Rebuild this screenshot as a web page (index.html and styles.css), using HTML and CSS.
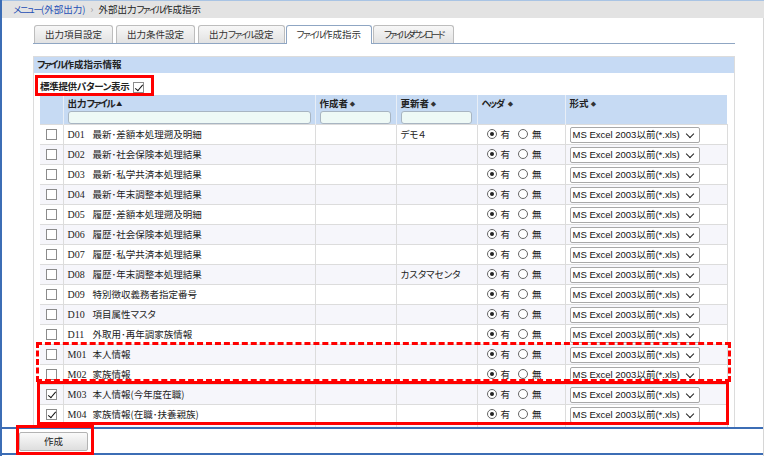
FILE: index.html
```html
<!DOCTYPE html>
<html lang="ja">
<head>
<meta charset="utf-8">
<link rel="stylesheet" href="styles.css">
</head>
<body>
<div class="app">
  <div class="crumb"><a class="crumb-link"><span class="k">メニュー</span>(外部出力)</a><span class="crumb-sep">›</span><span class="crumb-cur">外部出力<span class="k">ファイル</span>作成指示</span></div>
  <div class="main">
    <div class="tabs">
      <div class="tab">出力項目設定</div>
      <div class="tab">出力条件設定</div>
      <div class="tab">出力<span class="k">ファイル</span>設定</div>
      <div class="tab active"><span class="k">ファイル</span>作成指示</div>
      <div class="tab"><span class="k kk">ファイルダウンロード</span></div>
    </div>
    <div class="panel">
      <div class="panel-head"><span class="k">ファイル</span>作成指示情報</div>
      <div class="std"><span class="std-t">標準提供パターン表示</span><span class="cb checked"></span></div>
      <table class="grid">
        <colgroup>
          <col class="c-ck"><col class="c-file"><col class="c-by"><col class="c-up"><col class="c-hd"><col class="c-fmt">
        </colgroup>
        <thead>
          <tr>
            <th></th>
            <th><div class="th-t">出力<span class="k">ファイル</span> <span class="sort-up">▲</span></div><div class="fin fin-wide"></div></th>
            <th><div class="th-t">作成者 <span class="sort">⬥</span></div><div class="fin"></div></th>
            <th><div class="th-t">更新者 <span class="sort">⬥</span></div><div class="fin"></div></th>
            <th><div class="th-t"><span class="k">ヘッダ</span>&nbsp; <span class="sort">⬥</span></div><div class="fin-sp"></div></th>
            <th><div class="th-t">形式 <span class="sort">⬥</span></div><div class="fin-sp"></div></th>
          </tr>
        </thead>
        <tbody>
          <tr><td class="ck"><span class="cb"></span></td><td><span class="code">D01</span>最新･差額本処理遡及明細</td><td></td><td>デモ４</td><td class="hd"><span class="rd on"></span>有<span class="rd"></span>無</td><td><div class="sel">MS Excel 2003以前(*.xls)<span class="chev"></span></div></td></tr>
          <tr><td class="ck"><span class="cb"></span></td><td><span class="code">D02</span>最新･社会保険本処理結果</td><td></td><td></td><td class="hd"><span class="rd on"></span>有<span class="rd"></span>無</td><td><div class="sel">MS Excel 2003以前(*.xls)<span class="chev"></span></div></td></tr>
          <tr><td class="ck"><span class="cb"></span></td><td><span class="code">D03</span>最新･私学共済本処理結果</td><td></td><td></td><td class="hd"><span class="rd on"></span>有<span class="rd"></span>無</td><td><div class="sel">MS Excel 2003以前(*.xls)<span class="chev"></span></div></td></tr>
          <tr><td class="ck"><span class="cb"></span></td><td><span class="code">D04</span>最新･年末調整本処理結果</td><td></td><td></td><td class="hd"><span class="rd on"></span>有<span class="rd"></span>無</td><td><div class="sel">MS Excel 2003以前(*.xls)<span class="chev"></span></div></td></tr>
          <tr><td class="ck"><span class="cb"></span></td><td><span class="code">D05</span>履歴･差額本処理遡及明細</td><td></td><td></td><td class="hd"><span class="rd on"></span>有<span class="rd"></span>無</td><td><div class="sel">MS Excel 2003以前(*.xls)<span class="chev"></span></div></td></tr>
          <tr><td class="ck"><span class="cb"></span></td><td><span class="code">D06</span>履歴･社会保険本処理結果</td><td></td><td></td><td class="hd"><span class="rd on"></span>有<span class="rd"></span>無</td><td><div class="sel">MS Excel 2003以前(*.xls)<span class="chev"></span></div></td></tr>
          <tr><td class="ck"><span class="cb"></span></td><td><span class="code">D07</span>履歴･私学共済本処理結果</td><td></td><td></td><td class="hd"><span class="rd on"></span>有<span class="rd"></span>無</td><td><div class="sel">MS Excel 2003以前(*.xls)<span class="chev"></span></div></td></tr>
          <tr><td class="ck"><span class="cb"></span></td><td><span class="code">D08</span>履歴･年末調整本処理結果</td><td></td><td>カスタマセンタ</td><td class="hd"><span class="rd on"></span>有<span class="rd"></span>無</td><td><div class="sel">MS Excel 2003以前(*.xls)<span class="chev"></span></div></td></tr>
          <tr><td class="ck"><span class="cb"></span></td><td><span class="code">D09</span>特別徴収義務者指定番号</td><td></td><td></td><td class="hd"><span class="rd on"></span>有<span class="rd"></span>無</td><td><div class="sel">MS Excel 2003以前(*.xls)<span class="chev"></span></div></td></tr>
          <tr><td class="ck"><span class="cb"></span></td><td><span class="code">D10</span>項目属性マスタ</td><td></td><td></td><td class="hd"><span class="rd on"></span>有<span class="rd"></span>無</td><td><div class="sel">MS Excel 2003以前(*.xls)<span class="chev"></span></div></td></tr>
          <tr><td class="ck"><span class="cb"></span></td><td><span class="code">D11</span>外取用･再年調家族情報</td><td></td><td></td><td class="hd"><span class="rd on"></span>有<span class="rd"></span>無</td><td><div class="sel">MS Excel 2003以前(*.xls)<span class="chev"></span></div></td></tr>
          <tr><td class="ck"><span class="cb"></span></td><td><span class="code">M01</span>本人情報</td><td></td><td></td><td class="hd"><span class="rd on"></span>有<span class="rd"></span>無</td><td><div class="sel">MS Excel 2003以前(*.xls)<span class="chev"></span></div></td></tr>
          <tr><td class="ck"><span class="cb"></span></td><td><span class="code">M02</span>家族情報</td><td></td><td></td><td class="hd"><span class="rd on"></span>有<span class="rd"></span>無</td><td><div class="sel">MS Excel 2003以前(*.xls)<span class="chev"></span></div></td></tr>
          <tr><td class="ck"><span class="cb checked"></span></td><td><span class="code">M03</span>本人情報(今年度在職)</td><td></td><td></td><td class="hd"><span class="rd on"></span>有<span class="rd"></span>無</td><td><div class="sel">MS Excel 2003以前(*.xls)<span class="chev"></span></div></td></tr>
          <tr><td class="ck"><span class="cb checked"></span></td><td><span class="code">M04</span>家族情報(在職･扶養親族)</td><td></td><td></td><td class="hd"><span class="rd on"></span>有<span class="rd"></span>無</td><td><div class="sel">MS Excel 2003以前(*.xls)<span class="chev"></span></div></td></tr>
          <tr class="tail"><td class="ck"></td><td></td><td></td><td></td><td></td><td><div class="sel sel-stub"></div></td></tr>
        </tbody>
      </table>
    </div>
  </div>
  <div class="footer"><button class="btn">作成</button></div>

  <div class="mark mark-std"></div>
  <div class="mark mark-dash"></div>
  <div class="mark mark-solid"></div>
  <div class="mark mark-btn"></div>
</div>
</body>
</html>
```
FILE: styles.css
```css
* { box-sizing: border-box; }
html, body { margin: 0; padding: 0; background: #fff; }
body {
  font-family: "Noto Sans CJK JP", "Liberation Sans", sans-serif;
  font-size: 9.5px;
  font-feature-settings: "palt";
  color: #222;
  width: 765px;
  height: 456px;
  overflow: hidden;
}
.k { letter-spacing: -1.6px; }
.kk { letter-spacing: -2.6px; }
.app {
  position: relative;
  width: 764px;
  height: 456px;
  border-left: 2px solid #3c6db5;
  border-right: 1px solid #d6d6d6;
}
.crumb {
  height: 18px;
  background: #e3e3e3;
  border-top: 1px solid #a9c4e4;
  display: flex;
  align-items: center;
  padding-left: 11px;
  line-height: 1;
  margin-right: -1px;
}
.crumb-link { color: #1f4fb5; }
.crumb-sep { color: #999; margin: 0 5px; }
.crumb-cur { color: #222; }

.main {
  height: 409px;
  overflow: hidden;
  padding: 7px 28px 0 31px;
}
.tabs {
  display: flex;
  gap: 3px;
  border-bottom: 1px solid #8fa6c3;
  padding-left: 1px;
  height: 19px;
}
.tab {
  height: 18px;
  padding: 0 10px;
  display: flex;
  align-items: center;
  border: 1px solid #bdbdbd;
  border-bottom: none;
  border-radius: 3px 3px 0 0;
  background: linear-gradient(#f7f7f7, #e2e2e2);
  color: #333;
  line-height: 1;
  white-space: nowrap;
}
.tab.active {
  background: #fff;
  border-color: #8fa6c3;
  height: 19px;
  margin-bottom: -1px;
  margin-left: -2px;
  padding: 0 10px;
}
.tab.active + .tab { margin-left: -2px; }

.panel {
  margin-top: 12px;
  border: 1px solid #dcdcdc;
  border-bottom: none;
  padding: 0 6px 0 6px;
}
.panel-head {
  margin: 0 -6px;
  height: 16px;
  background: #c6daf4;
  font-weight: bold;
  padding-left: 3px;
  display: flex;
  align-items: center;
  line-height: 1;
  color: #222;
}
.std {
  height: 22px;
  display: flex;
  align-items: center;
  font-weight: bold;
  padding-top: 6px;
  line-height: 1;
  gap: 4px;
}
.std-t { letter-spacing: -0.3px; }

.grid {
  border-collapse: collapse;
  table-layout: fixed;
  width: 687px;
}
.c-ck { width: 23px; }
.c-file { width: 252px; }
.c-by { width: 81px; }
.c-up { width: 81px; }
.c-hd { width: 88px; }
.c-fmt { width: 162px; }
.grid th {
  background: #c6daf3;
  border-left: 1px solid #e8eef6;
  text-align: left;
  vertical-align: top;
  padding: 3px 4px 0 4px;
  font-weight: bold;
  height: 28px;
}
.grid th:first-child { border-left: none; }
.th-t { line-height: 11px; height: 11px; white-space: nowrap; }
.sort-up { font-size: 6px; vertical-align: 1px; }
.sort { font-size: 7px; vertical-align: 1px; color: #333; }
.fin {
  margin-top: 2px;
  height: 13px;
  border: 1px solid #a8b5c2;
  border-radius: 3px;
  background: #eef9f6;
  width: 71px;
}
.fin-wide { width: 243px; }
.fin-sp { height: 15px; }

.grid td {
  height: 20px;
  border: 1px solid #dcdcdc;
  padding: 0 4px;
  white-space: nowrap;
  overflow: hidden;
  line-height: 1;
  vertical-align: middle;
}
.grid tbody tr:nth-child(even) td { background: #f6f6fb; }
.grid td.ck { text-align: center; padding: 0; border-left: none; }
.code {
  font-family: "Liberation Serif", serif;
  display: inline-block;
  width: 25px;
  font-size: 10px;
}
.cb {
  display: inline-block;
  width: 11px;
  height: 11px;
  border: 1px solid #8c8c8c;
  background: #fff;
  vertical-align: middle;
  position: relative;
}
.cb.checked::after {
  content: "";
  position: absolute;
  left: 3px;
  top: 0px;
  width: 3px;
  height: 7px;
  border: solid #111;
  border-width: 0 1.5px 1.5px 0;
  transform: rotate(40deg);
}
.hd { padding-left: 9px !important; }
.rd {
  display: inline-block;
  width: 10px;
  height: 10px;
  border: 1px solid #666;
  border-radius: 50%;
  vertical-align: -1px;
  margin-right: 4px;
  background: #fff;
  position: relative;
}
.hd .rd:not(.on) { margin-left: 8px; }
.rd.on::after {
  content: "";
  position: absolute;
  left: 2px;
  top: 2px;
  width: 4px;
  height: 4px;
  border-radius: 50%;
  background: #222;
}
.sel {
  width: 130px;
  height: 16px;
  border: 1px solid #a8a8a8;
  border-radius: 2px;
  background: #fff;
  font-family: "Liberation Sans", Arial, "Noto Sans CJK JP", sans-serif;
  font-size: 9.5px;
  padding-left: 2px;
  display: flex;
  align-items: center;
  position: relative;
  color: #111;
}
.chev {
  position: absolute;
  right: 6px;
  top: 3px;
  width: 6px;
  height: 6px;
  border: solid #222;
  border-width: 0 1.5px 1.5px 0;
  transform: rotate(45deg);
}

.footer {
  height: 28px;
  border-top: 2px solid #3c6db5;
  border-bottom: 2px solid #3c6db5;
  padding: 3px 0 0 17px;
  background: #fff;
}
.btn {
  width: 69px;
  height: 19px;
  border: 1px solid #b3b3b3;
  border-radius: 2px;
  background: linear-gradient(#fafafa, #dedede);
  font-family: "Noto Sans CJK JP", sans-serif;
  font-size: 9.5px;
  color: #222;
  padding: 0;
  line-height: 1;
}

.mark { position: absolute; border: 3px solid #ff0000; pointer-events: none; }
.mark-std { left: 33px; top: 75px; width: 119px; height: 21px; }
.mark-dash { left: 34px; top: 342px; width: 695px; height: 40px; border-style: dashed; }
.mark-solid { left: 35px; top: 381px; width: 692px; height: 44px; }
.mark-btn { left: 14px; top: 425px; width: 78px; height: 30px; }
```
